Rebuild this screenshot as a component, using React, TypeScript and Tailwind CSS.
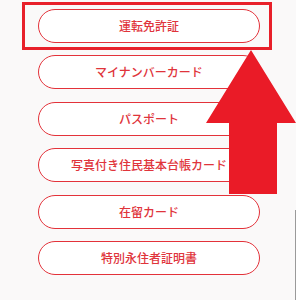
import React from "react";

const items = [
  "運転免許証",
  "マイナンバーカード",
  "パスポート",
  "写真付き住民基本台帳カード",
  "在留カード",
  "特別永住者証明書",
];

export default function App() {
  return (
    <div
      className="relative w-[296px] h-[300px] overflow-hidden bg-[#faf9f9]"
      style={{ fontFamily: '"Noto Sans CJK JP", "Noto Sans", sans-serif' }}
    >
      <div className="flex flex-col gap-[12.4px] pt-[9px] pl-[38px]">
        {items.map((t) => (
          <div
            key={t}
            className="w-[222px] h-[34px] rounded-full border-[1.5px] border-[#e3323a] bg-white flex items-center justify-center text-[12px] font-medium text-[#e0343b] leading-none"
          >
            {t}
          </div>
        ))}
      </div>
      <div className="absolute left-[22px] top-[2px] w-[250px] h-[48px] border-[3px] border-[#e8202a]" />
      <svg
        className="absolute left-0 top-0"
        width="296"
        height="300"
        viewBox="0 0 296 300"
      >
        <polygon
          points="251,50 296,123 277,123 277,194 229,194 229,123 206,123"
          fill="#ea1b27"
        />
      </svg>
      <div className="absolute left-[295px] top-[210px] w-px h-[90px] bg-[#9a9a9a]" />
    </div>
  );
}
